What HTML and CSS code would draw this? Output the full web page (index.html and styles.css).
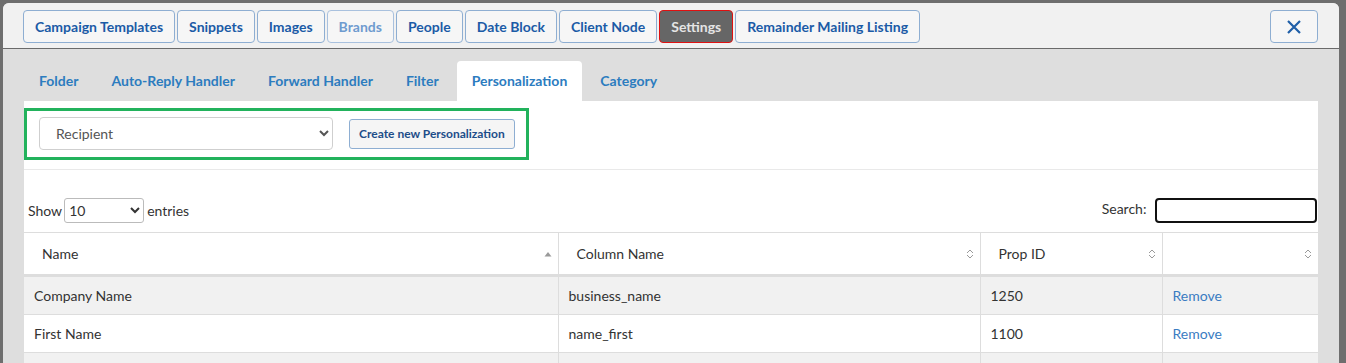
FILE: index.html
```html
<!DOCTYPE html>
<html lang="en">
<head>
    <meta charset="UTF-8">
    <meta name="viewport" content="width=device-width, initial-scale=1.0">
    <title>Settings - Personalization</title>
    <link rel="stylesheet" href="styles.css">
</head>
<body>

<div class="modal">
    <div class="modal-header">
        <div class="top-nav">
            <button class="nav-btn">Campaign Templates</button>
            <button class="nav-btn">Snippets</button>
            <button class="nav-btn">Images</button>
            <button class="nav-btn disabled">Brands</button>
            <button class="nav-btn">People</button>
            <button class="nav-btn">Date Block</button>
            <button class="nav-btn">Client Node</button>
            <button class="nav-btn active">Settings</button>
            <button class="nav-btn">Remainder Mailing Listing</button>
        </div>
        <button class="close-btn" aria-label="Close">
            <svg width="16" height="16" viewBox="0 0 16 16">
                <path d="M2 2 L14 14 M14 2 L2 14" stroke="#1f5fa8" stroke-width="2.2" fill="none"/>
            </svg>
        </button>
    </div>

    <div class="modal-body">
        <ul class="tabs">
            <li>Folder</li>
            <li>Auto-Reply Handler</li>
            <li>Forward Handler</li>
            <li>Filter</li>
            <li class="active">Personalization</li>
            <li>Category</li>
        </ul>

        <div class="panel">
            <div class="toolbar-wrap">
                <div class="toolbar">
                    <select class="type-select">
                        <option>Recipient</option>
                        <option>Sender</option>
                    </select>
                    <button class="create-btn">Create new Personalization</button>
                </div>
            </div>

            <div class="dt-controls">
                <label class="dt-length">Show<select class="length-select">
                        <option>10</option>
                        <option>25</option>
                        <option>50</option>
                    </select>entries</label>
                <label class="dt-search">Search: <input type="text" class="search-input"></label>
            </div>

            <table class="data-table">
                <colgroup>
                    <col class="col-name">
                    <col class="col-column">
                    <col class="col-prop">
                    <col class="col-action">
                </colgroup>
                <thead>
                    <tr>
                        <th>Name
                            <svg class="sort-icon" width="8" height="6" viewBox="0 0 8 6"><path d="M4 1 L7.5 5.5 L0.5 5.5 Z" fill="#9a9a9a"/></svg>
                        </th>
                        <th>Column Name
                            <svg class="sort-icon" width="8" height="12" viewBox="0 0 8 12"><path d="M1 5 L4 2 L7 5 M1 7 L4 10 L7 7" stroke="#9a9a9a" stroke-width="1" fill="none"/></svg>
                        </th>
                        <th>Prop ID
                            <svg class="sort-icon" width="8" height="12" viewBox="0 0 8 12"><path d="M1 5 L4 2 L7 5 M1 7 L4 10 L7 7" stroke="#9a9a9a" stroke-width="1" fill="none"/></svg>
                        </th>
                        <th>
                            <svg class="sort-icon" width="8" height="12" viewBox="0 0 8 12"><path d="M1 5 L4 2 L7 5 M1 7 L4 10 L7 7" stroke="#9a9a9a" stroke-width="1" fill="none"/></svg>
                        </th>
                    </tr>
                </thead>
                <tbody>
                    <tr>
                        <td>Company Name</td>
                        <td>business_name</td>
                        <td>1250</td>
                        <td><a href="#" class="remove-link">Remove</a></td>
                    </tr>
                    <tr>
                        <td>First Name</td>
                        <td>name_first</td>
                        <td>1100</td>
                        <td><a href="#" class="remove-link">Remove</a></td>
                    </tr>
                    <tr class="filler">
                        <td></td>
                        <td></td>
                        <td></td>
                        <td></td>
                    </tr>
                </tbody>
            </table>
        </div>
    </div>
</div>

</body>
</html>
```

FILE: styles.css
```css
body {
    font-family: Lato, "Open Sans", Arial, sans-serif;
    background-color: #6e6e6e;
    margin: 0;
    padding: 3px 7px 0 3px;
    height: 360px;
    overflow: hidden;
}
.modal {
    background-color: #dedede;
    border-radius: 6px 6px 0 0;
    height: 100%;
    overflow: hidden;
}

/* header with the main nav buttons */
.modal-header {
    display: flex;
    justify-content: space-between;
    background-color: #f1f1f1;
    padding: 7px 21px 5px 20px;
    border-bottom: 1px solid #6a6a6a;
}
.top-nav {
    display: flex;
    gap: 2px;
}
.nav-btn {
    height: 33px;
    padding: 0 11px;
    border: 1px solid #8eaed2;
    border-radius: 4px;
    background-color: #f6f6f6;
    color: #1b5ba6;
    font-family: inherit;
    font-size: 14px;
    font-weight: bold;
    cursor: pointer;
}
.nav-btn.disabled {
    color: #6e9bcf;
    border-color: #a9c1de;
}
.nav-btn.active {
    background-color: #666;
    border-color: #e01010;
    color: #e4e4e4;
}
.close-btn {
    width: 48px;
    height: 33px;
    border: 1px solid #8eaed2;
    border-radius: 4px;
    background-color: #f6f6f6;
    display: flex;
    align-items: center;
    justify-content: center;
    cursor: pointer;
}

/* body */
.modal-body {
    padding: 12px 21px 0 21px;
}
.tabs {
    list-style: none;
    margin: 0;
    padding: 0;
    display: flex;
    gap: 3px;
}
.tabs li {
    height: 40px;
    line-height: 40px;
    padding: 0 15px;
    font-size: 14px;
    font-weight: bold;
    color: #2c7cbf;
    border-radius: 4px 4px 0 0;
}
.tabs li.active {
    background-color: #fff;
}
.panel {
    background-color: #fff;
    height: 300px;
}
.toolbar-wrap {
    padding: 7px 0 9px 0;
    border-bottom: 1px solid #e9e9e9;
}
.toolbar {
    display: inline-flex;
    align-items: center;
    gap: 16px;
    border: 3px solid #22b25c;
    padding: 6px 11px 7px 12px;
}
.type-select {
    width: 294px;
    height: 33px;
    padding-left: 12px;
    border: 1px solid #cfcfcf;
    border-radius: 4px;
    background-color: #fff;
    color: #555;
    font-family: inherit;
    font-size: 14px;
}
.create-btn {
    height: 30px;
    padding: 0 9px;
    border: 1px solid #8eaed2;
    border-radius: 3px;
    background-color: #f5f5f5;
    color: #1d4d89;
    font-family: inherit;
    font-size: 12px;
    font-weight: bold;
}

/* datatable controls */
.dt-controls {
    display: flex;
    justify-content: space-between;
    align-items: center;
    padding: 28px 1px 9px 4px;
    font-size: 14px;
    color: #333;
}
.length-select {
    width: 80px;
    height: 25px;
    margin: 0 3px 0 2px;
    border: 1px solid #bbb;
    border-radius: 3px;
    background-color: #fff;
    font-family: inherit;
    font-size: 14px;
    color: #333;
}
.search-input {
    width: 158px;
    height: 21px;
    margin-left: 5px;
    border: 2px solid #111;
    border-radius: 4px;
    padding: 0;
    vertical-align: middle;
}

/* table */
.data-table {
    width: 100%;
    border-collapse: collapse;
    table-layout: fixed;
    font-size: 14px;
    color: #333;
}
.col-name { width: 534px; }
.col-column { width: 422px; }
.col-prop { width: 182px; }
.data-table th {
    position: relative;
    height: 41px;
    padding: 0 18px;
    text-align: left;
    font-weight: normal;
    border-top: 1px solid #ddd;
    border-left: 1px solid #ddd;
    border-bottom: 3px solid #ddd;
}
.data-table th:first-child,
.data-table td:first-child {
    border-left: none;
}
.sort-icon {
    position: absolute;
    right: 6px;
    top: 50%;
    transform: translateY(-50%);
}
.data-table td {
    height: 37px;
    padding: 0 10px;
    border-left: 1px solid #ddd;
    border-bottom: 1px solid #ddd;
}
.data-table tbody tr:nth-child(odd) {
    background-color: #f1f1f1;
}
.remove-link {
    color: #3a7cc2;
    text-decoration: none;
}
```
